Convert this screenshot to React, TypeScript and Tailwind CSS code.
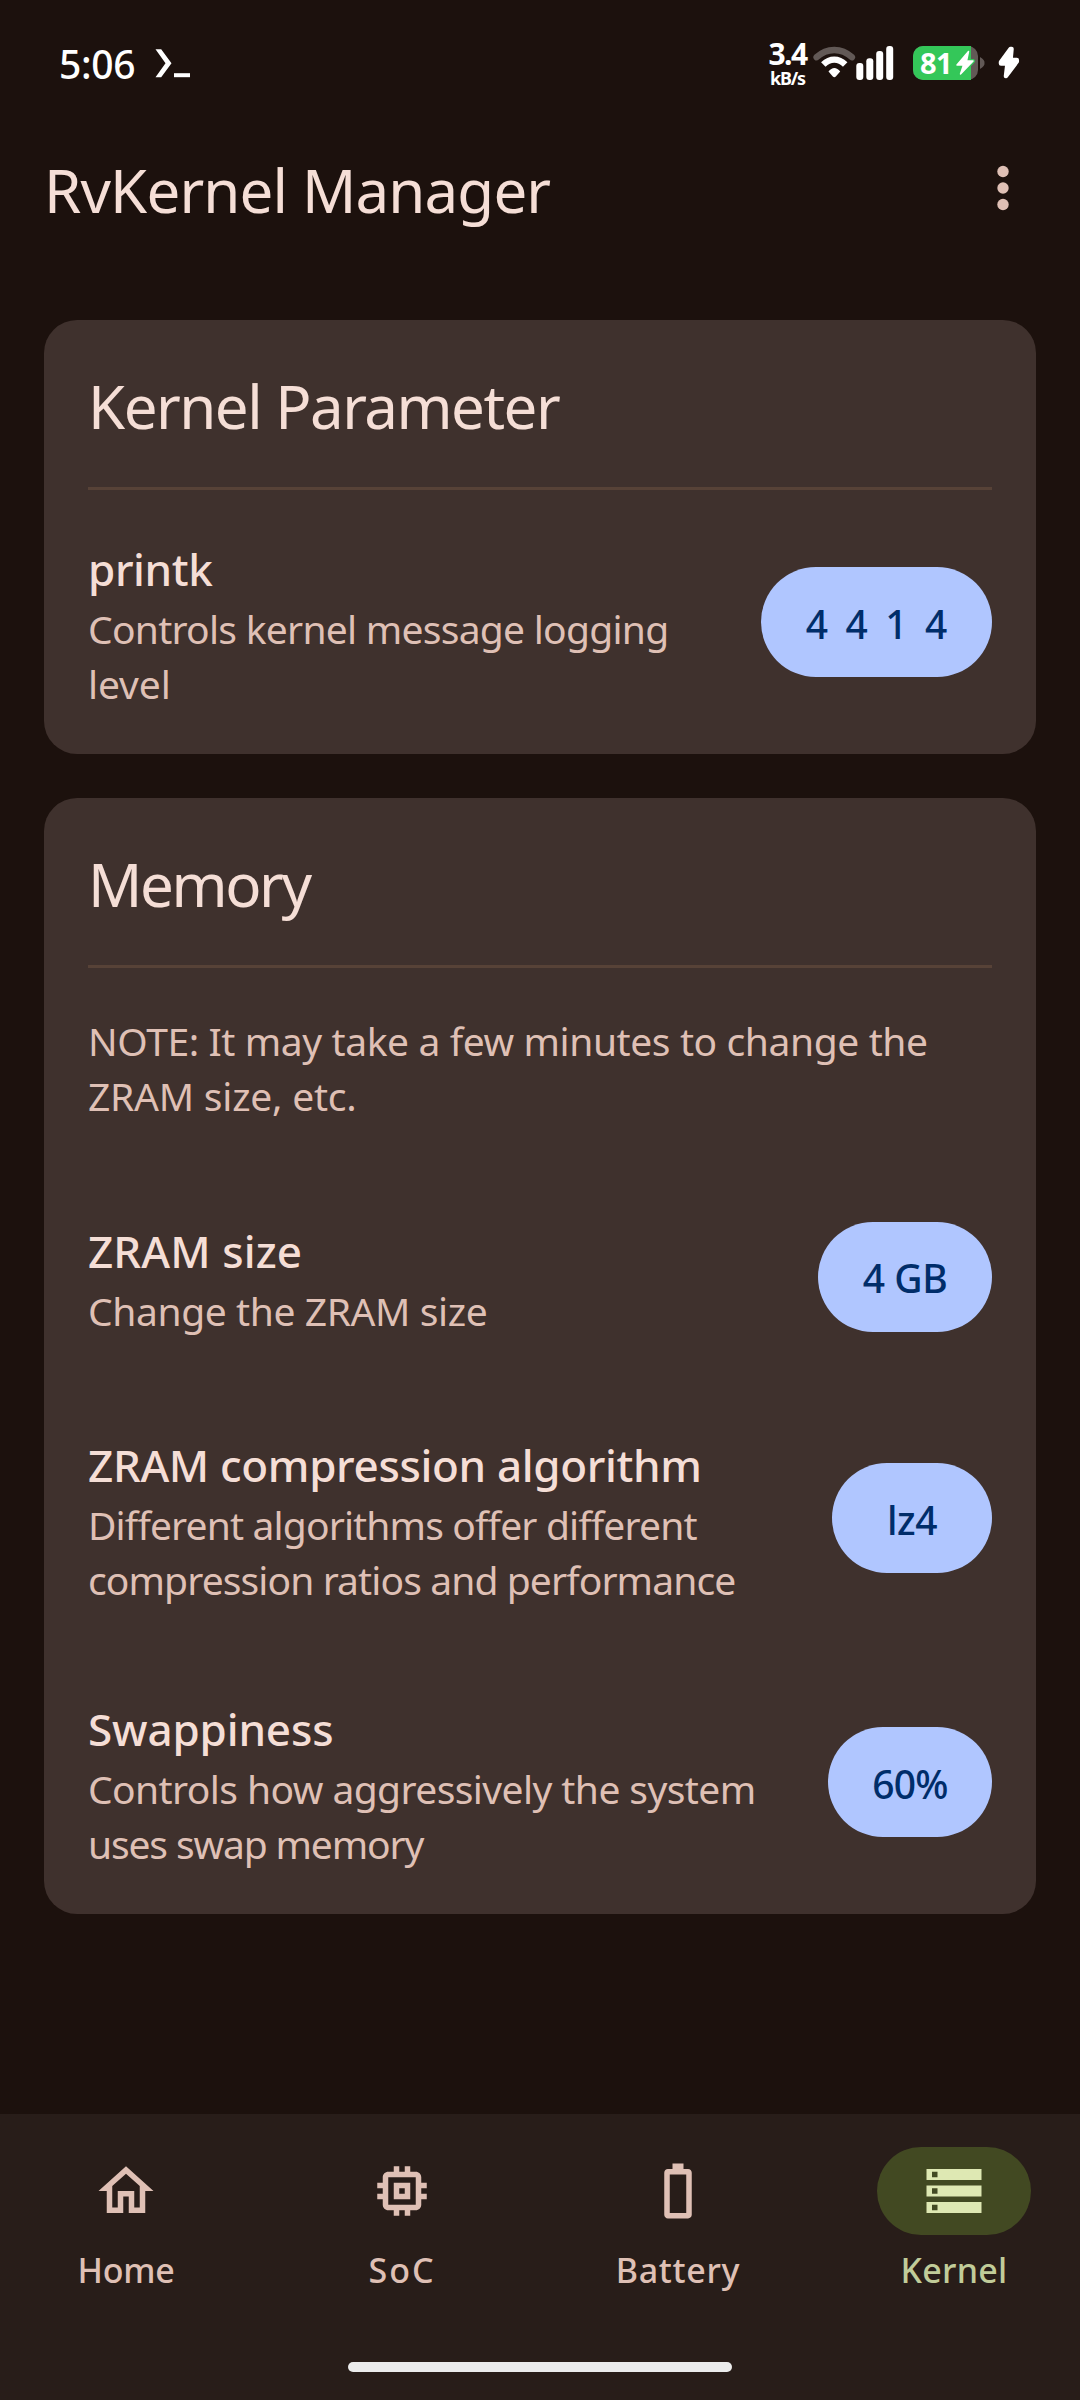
import React from 'react';

type Line = { text: string; className: string };

function Lines({ lines }: { lines: Line[] }) {
  return (
    <p className="text-[39px] leading-[55px] text-[#dfc0b5]">
      {lines.map((line) => (
        <span key={line.text} className={`block whitespace-nowrap ${line.className}`}>
          {line.text}
        </span>
      ))}
    </p>
  );
}

function Setting({
  title,
  titleClass,
  lines,
  value,
  pillClass,
  className = '',
}: {
  title: string;
  titleClass: string;
  lines: Line[];
  value: string;
  pillClass: string;
  className?: string;
}) {
  return (
    <div className={`flex items-center justify-between ${className}`}>
      <div className="pt-[5px]">
        <h3 className={`whitespace-nowrap text-[44px] font-medium leading-[63px] text-[#f5ded6] ${titleClass}`}>
          {title}
        </h3>
        <Lines lines={lines} />
      </div>
      <button
        className={`flex h-[110px] shrink-0 items-center justify-center whitespace-nowrap rounded-full bg-[#b0c6ff] pt-[4px] text-[39px] font-medium text-[#002d6a] ${pillClass}`}
      >
        {value}
      </button>
    </div>
  );
}

function Card({
  title,
  titleClass,
  children,
}: {
  title: string;
  titleClass: string;
  children: React.ReactNode;
}) {
  return (
    <section className="rounded-[33px] bg-[#3f312d] px-[44px] pb-[43px] pt-[48px]">
      <h2 className={`whitespace-nowrap text-[60px] leading-[77px] text-[#f5ded6] ${titleClass}`}>{title}</h2>
      <div className="mt-[42px] h-[3px] bg-[#574237]" />
      {children}
    </section>
  );
}

function StatusBar() {
  return (
    <div className="flex h-[126px] items-center pl-[59px] text-white">
      <span className="w-[96px] text-[39px] font-medium leading-none tracking-[-0.3px]">5:06</span>
      <svg width="36" height="36" viewBox="155 45 36 36" fill="#fff">
        <path d="M155.500 49.300H161.200L171.500 63.300L161.200 77.300H155.500L165.500 63.300Z" />
        <path d="M174 73.200h16v4h-16z" />
      </svg>

      <div className="ml-[576px] flex w-[41px] flex-col items-center pt-[6px] font-bold">
        <span className="h-[24px] text-[30px] leading-[24px] tracking-[-1.6px]">3.4</span>
        <span className="h-[24px] text-[18px] leading-[24px] tracking-[-1.2px]">kB/s</span>
      </div>
      <svg className="ml-[5px]" width="43" height="36" viewBox="813 45 43 36">
        <path
          d="M816.6 57.2 C827 47.5 841.500 47.500 851.900 57.200"
          fill="none"
          stroke="#625956"
          strokeWidth="6.4"
          strokeLinecap="round"
        />
        <path d="M823.300 64.500 C830 58 838.500 58 845.200 64.500" fill="none" stroke="#fff" strokeWidth="6.4" />
        <path
          d="M828.500 71.500 C832 66.800 836.700 66.800 840.200 71.500 L835.800 76.500 Q834.300 78 832.800 76.500 Z"
          fill="#fff"
        />
      </svg>
      <svg width="38" height="36" viewBox="856 45 38 36" fill="#fff">
        <rect x="856.3" y="63" width="7" height="17" rx="3" />
        <rect x="866.3" y="58.300" width="7" height="21.700" rx="3" />
        <rect x="876.200" y="51" width="7" height="29" rx="3" />
        <rect x="886.200" y="46" width="7" height="34" rx="3" />
      </svg>

      <div className="relative ml-[19px] h-[34px] w-[65px] rounded-[10px] bg-[#625956]">
        <div className="flex h-full w-[58px] items-center rounded-l-[10px] bg-[#34c759] pl-[7px]">
          <span className="text-[29px] font-bold leading-[34px] tracking-[-0.6px]">81</span>
        </div>
        <svg className="absolute left-[41px] top-[3px]" width="22" height="28" viewBox="954 49 22 28">
          <path
            d="M968.500 51.500 L957 65 H963.500 L960.500 74 L973 61 H966.500 Z"
            fill="#fff"
            stroke="#34c759"
            strokeWidth="4"
            strokeLinejoin="round"
            paintOrder="stroke"
          />
          <path
            d="M968.500 51.500 L957 65 H963.500 L960.500 74 L973 61 H966.500 Z"
            fill="#fff"
            stroke="#fff"
            strokeWidth="1.5"
            strokeLinejoin="round"
          />
        </svg>
      </div>
      <svg className="ml-[2px]" width="5" height="12" viewBox="0 0 5 12">
        <path d="M0 0 Q5 3 4.500 6 Q5 9 0 12Z" fill="#625956" />
      </svg>
      <svg className="ml-[12px]" width="24" height="36" viewBox="997 45 24 36">
        <path
          d="M1010.500 49 L1001 62 V63.500 H1007.500 L1006 76 L1016.800 61.500 V60 H1010.500 L1011.500 49 Z"
          fill="#fff"
          stroke="#fff"
          strokeWidth="4.500"
          strokeLinejoin="round"
        />
      </svg>
    </div>
  );
}

const tabs = [
  {
    label: 'Home',
    labelClass: 'tracking-[-0.2px]',
    path: 'M12 5.690l5 4.500V18h-2v-6H9v6H7v-7.810l5-4.500M12 3L2 12h3v8h6v-6h2v6h6v-8h3L12 3z',
  },
  {
    label: 'SoC',
    labelClass: 'tracking-[1.9px]',
    path: 'M15 9H9v6h6V9zm-2 4h-2v-2h2v2zm8-2V9h-2V7c0-1.100-.900-2-2-2h-2V3h-2v2h-2V3H9v2H7c-1.100 0-2 .900-2 2v2H3v2h2v2H3v2h2v2c0 1.100.900 2 2 2h2v2h2v-2h2v2h2v-2h2c1.100 0 2-.900 2-2v-2h2v-2h-2v-2h2zm-4 6H7V7h10v10z',
  },
  {
    label: 'Battery',
    labelClass: 'tracking-[0.7px]',
    path: 'M15.670 4H14V2h-4v2H8.330C7.600 4 7 4.600 7 5.330v15.330C7 21.400 7.600 22 8.330 22h7.330c.740 0 1.340-.600 1.340-1.330V5.330C17 4.600 16.400 4 15.670 4zM15 20H9V6h6v14z',
  },
  {
    label: 'Kernel',
    labelClass: 'tracking-[0.3px]',
    path: 'M2 20h20v-4H2v4zm2-3h2v2H4v-2zM2 4v4h20V4H2zm4 3H4V5h2v2zm-4 7h20v-4H2v4zm2-3h2v2H4v-2z',
    active: true,
  },
];

function NavBar() {
  return (
    <nav className="mt-auto flex h-[286px] flex-col bg-[#281d19]">
      <div className="flex gap-[24px] pt-[33px]">
        {tabs.map((tab) => (
          <div
            key={tab.label}
            className={`flex w-[252px] flex-col items-center ${tab.active ? 'text-[#c1cc99]' : 'text-[#dfc0b5]'}`}
          >
            <div
              className={`flex h-[88px] w-[154px] items-center justify-center rounded-full ${
                tab.active ? 'bg-[#424922] text-[#dee8b3]' : ''
              }`}
            >
              <svg width="66" height="66" viewBox="0 0 24 24" fill="currentColor">
                <path fillRule="evenodd" d={tab.path} />
              </svg>
            </div>
            <span className={`mt-[13px] text-[34px] font-medium leading-[44px] ${tab.labelClass}`}>{tab.label}</span>
          </div>
        ))}
      </div>
      <div className="mx-auto mb-[28px] mt-auto h-[10px] w-[384px] rounded-full bg-[#ececec]" />
    </nav>
  );
}

export default function App() {
  return (
    <div className="flex h-[2400px] w-[1080px] flex-col bg-[#1c110d] font-['Noto_Sans',sans-serif]">
      <StatusBar />

      <header className="flex h-[194px] items-start justify-between pl-[44px] pr-[44px] pt-[26px]">
        <h1 className="whitespace-nowrap text-[60px] leading-[77px] tracking-[-0.85px] text-[#f5ded6]">
          RvKernel Manager
        </h1>
        <svg className="mt-[3px]" width="66" height="66" viewBox="0 0 66 66" fill="#dfc0b5">
          <circle cx="33" cy="16.500" r="5.700" />
          <circle cx="33" cy="33" r="5.700" />
          <circle cx="33" cy="49.500" r="5.700" />
        </svg>
      </header>

      <main className="flex flex-col gap-[44px] px-[44px]">
        <Card title="Kernel Parameter" titleClass="tracking-[-1.5px]">
          <Setting
            className="mt-[43px]"
            title="printk"
            titleClass="tracking-[-0.4px]"
            lines={[
              { text: 'Controls kernel message logging', className: 'tracking-[-0.73px]' },
              { text: 'level', className: 'tracking-[-0.1px]' },
            ]}
            value="4 4 1 4"
            pillClass="w-[231px] [word-spacing:7.3px]"
          />
        </Card>

        <Card title="Memory" titleClass="tracking-[-2.4px]">
          <div className="mt-[45px]">
            <Lines
              lines={[
                { text: 'NOTE: It may take a few minutes to change the', className: 'tracking-[-0.4px]' },
                { text: 'ZRAM size, etc.', className: 'tracking-[-0.23px]' },
              ]}
            />
          </div>
          <Setting
            className="mt-[92px]"
            title="ZRAM size"
            titleClass="tracking-[0.1px]"
            lines={[{ text: 'Change the ZRAM size', className: 'tracking-[-0.4px]' }]}
            value="4 GB"
            pillClass="w-[174px] tracking-[-0.43px]"
          />
          <Setting
            className="mt-[91px]"
            title="ZRAM compression algorithm"
            titleClass="tracking-[-0.34px]"
            lines={[
              { text: 'Different algorithms offer different', className: 'tracking-[-0.85px]' },
              { text: 'compression ratios and performance', className: 'tracking-[-0.89px]' },
            ]}
            value="lz4"
            pillClass="w-[160px] tracking-[-0.42px]"
          />
          <Setting
            className="mt-[86px]"
            title="Swappiness"
            titleClass="tracking-[-0.15px]"
            lines={[
              { text: 'Controls how aggressively the system', className: 'tracking-[-0.58px]' },
              { text: 'uses swap memory', className: 'tracking-[-1.14px]' },
            ]}
            value="60%"
            pillClass="w-[164px] tracking-[-0.81px]"
          />
        </Card>
      </main>

      <NavBar />
    </div>
  );
}
